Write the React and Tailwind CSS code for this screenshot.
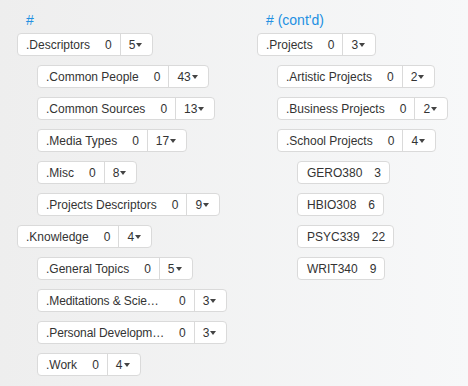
import React from "react";

const left = [
  { label: ".Descriptors", n: 5, d: 0 },
  { label: ".Common People", n: 43, d: 1 },
  { label: ".Common Sources", n: 13, d: 1 },
  { label: ".Media Types", n: 17, d: 1 },
  { label: ".Misc", n: 8, d: 1 },
  { label: ".Projects Descriptors", n: 9, d: 1 },
  { label: ".Knowledge", n: 4, d: 0 },
  { label: ".General Topics", n: 5, d: 1 },
  { label: ".Meditations & Scie…", n: 3, d: 1, fixed: true },
  { label: ".Personal Developm…", n: 3, d: 1, fixed: true },
  { label: ".Work", n: 4, d: 1 },
];

const right = [
  { label: ".Projects", n: 3, d: 0 },
  { label: ".Artistic Projects", n: 2, d: 1 },
  { label: ".Business Projects", n: 2, d: 1 },
  { label: ".School Projects", n: 4, d: 1 },
  { label: "GERO380", n: 3, d: 2, leaf: true },
  { label: "HBIO308", n: 6, d: 2, leaf: true },
  { label: "PSYC339", n: 22, d: 2, leaf: true },
  { label: "WRIT340", n: 9, d: 2, leaf: true },
];

const indent = ["ml-0", "ml-5", "ml-10"];

function Item({ item }) {
  if (item.leaf) {
    return (
      <div className={`${indent[item.d]} self-start flex items-center h-[23px] bg-white border border-[#dadada] rounded-[4px] pl-[9px] pr-[8px]`}>
        <span>{item.label}</span>
        <span className="ml-3">{item.n}</span>
      </div>
    );
  }
  return (
    <div className={`${indent[item.d]} self-start flex items-stretch h-[23px] bg-white border border-[#dadada] rounded-[4px]`}>
      <div className="flex items-center pl-2 pr-2">
        <span className={item.fixed ? "w-[118px] shrink-0 whitespace-nowrap tracking-[-0.1px]" : "whitespace-nowrap"}>{item.label}</span>
        <span className="ml-[15px]">0</span>
      </div>
      <div className="flex items-center border-l border-[#dadada] pl-2 pr-[10px]">
        <span>{item.n}</span>
        <span className="ml-[1px] mt-[1px] w-0 h-0 border-t-[4px] border-t-[#444] border-x-[3px] border-x-transparent"></span>
      </div>
    </div>
  );
}

function Column({ title, items, width }) {
  return (
    <div className={`flex flex-col ${width}`}>
      <div className="ml-[9px] text-[14px] leading-4 text-[#2290e2] mb-[5px]">{title}</div>
      <div className="flex flex-col gap-[9px]">
        {items.map((it, i) => (
          <Item key={i} item={it} />
        ))}
      </div>
    </div>
  );
}

export default function App() {
  return (
    <div
      className="w-[468px] h-[386px] overflow-hidden bg-linear-to-r from-[#eeeeee] to-[#f7f8f9] text-[12px] text-[#333] flex pl-[17px] pt-[12px]"
      style={{ fontFamily: '"Liberation Sans", Arial, sans-serif' }}
    >
      <Column title="#" items={left} width="w-[240px]" />
      <Column title="# (cont'd)" items={right} width="w-[200px]" />
    </div>
  );
}
